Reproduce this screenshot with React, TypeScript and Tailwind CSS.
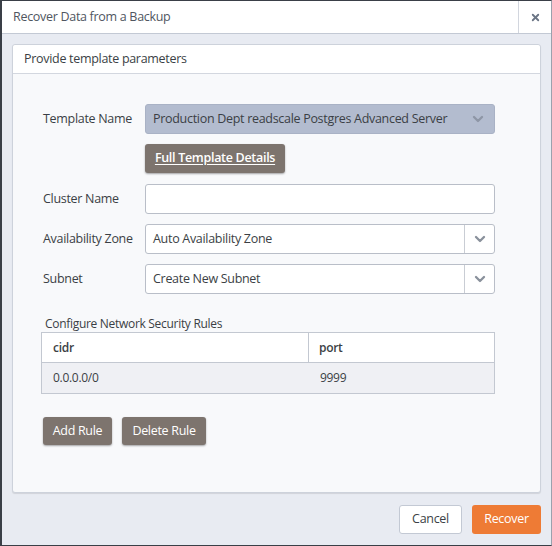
import { ChevronDown, X } from 'lucide-react'

function Chevron({ color = 'text-[#8a919c]' }: { color?: string }) {
  return <ChevronDown className={`w-4 h-4 ${color}`} strokeWidth={3.5} />
}

function FieldRow({ label, children }: { label: string; children: React.ReactNode }) {
  return (
    <div className="flex items-center">
      <div className="w-[102px] text-[#3b3f45]">{label}</div>
      <div className="w-[350px]">{children}</div>
    </div>
  )
}

function SelectBox({ value }: { value: string }) {
  return (
    <div className="h-[30px] flex items-stretch bg-white border border-[#b9bec8] rounded-[3px]">
      <div className="flex-1 flex items-center px-[7px] text-[#3b3f45]">{value}</div>
      <div className="w-[30px] border-l border-[#c9cdd4] flex items-center justify-center">
        <Chevron />
      </div>
    </div>
  )
}

const brownBtn =
  'bg-[#7d746e] text-white rounded-[3px] shadow-[0_1px_2px_rgba(0,0,0,0.35)]'

export default function App() {
  return (
    <div
      className="w-[552px] h-[546px] flex flex-col bg-[#e8ebf2] text-[12.5px] tracking-[-0.3px] border-l-2 border-t border-b border-r border-l-[#3a3f47] border-t-[#3a3f47] border-b-[#3a3f47] border-r-[#9aa1ad] overflow-hidden"
      style={{ fontFamily: '"Open Sans", "Noto Sans", sans-serif' }}
    >
      <div className="h-[33px] flex bg-white border-b border-[#c3c9d4] shrink-0">
        <div className="flex-1 flex items-center pl-[11px] text-[#50565f]">
          Recover Data from a Backup
        </div>
        <div className="w-[33px] border-l border-[#d2d6de] flex items-center justify-center">
          <X className="w-[11px] h-[11px] text-[#6b7585]" strokeWidth={4} />
        </div>
      </div>

      <div className="flex-1 flex flex-col px-[10px] pt-[10px]">
        <div className="h-[449px] flex flex-col bg-[#f8f9fb] border border-[#cdd2db] rounded-[3px] shadow-[0_1px_1px_rgba(0,0,0,0.1)]">
          <div className="h-[29px] flex items-center bg-white border-b border-[#d3d7df] pl-[11px] text-[#3b3f45] rounded-t-[3px]">
            Provide template parameters
          </div>

          <div className="flex flex-col pl-[30px] pt-[30px]">
            <FieldRow label="Template Name">
              <div className="h-[30px] flex items-center justify-between bg-[#b3bccf] border border-[#a9b2c5] rounded-[3px] pl-[7px] pr-[8px] text-[#3b3f45]">
                <span className="whitespace-nowrap">Production Dept readscale Postgres Advanced Server</span>
                <Chevron color="text-[#8e96a6]" />
              </div>
            </FieldRow>

            <div className="pl-[102px] mt-[10px]">
              <button className={`${brownBtn} h-[29px] w-[140px] font-semibold underline underline-offset-2`}>
                Full Template Details
              </button>
            </div>

            <div className="mt-[11px] flex flex-col gap-[10px]">
              <FieldRow label="Cluster Name">
                <div className="h-[30px] bg-white border border-[#b9bec8] rounded-[3px]" />
              </FieldRow>
              <FieldRow label="Availability Zone">
                <SelectBox value="Auto Availability Zone" />
              </FieldRow>
              <FieldRow label="Subnet">
                <SelectBox value="Create New Subnet" />
              </FieldRow>
            </div>

            <div className="mt-[22px] ml-[2px] text-[12px] leading-[16px] text-[#3b3f45]">
              Configure Network Security Rules
            </div>
            <div className="w-[454px] -ml-[2px] border border-[#c3c8d1] text-[12px] text-[#3b3f45]">
              <div className="h-[30px] flex bg-white border-b border-[#c3c8d1]">
                <div className="w-[267px] border-r border-[#c3c8d1] flex items-center pl-[11px] font-semibold">cidr</div>
                <div className="flex-1 flex items-center pl-[10px] font-semibold">port</div>
              </div>
              <div className="h-[30px] flex bg-[#eff0f4]">
                <div className="w-[267px] flex items-center pl-[11px]">0.0.0.0/0</div>
                <div className="flex-1 flex items-center pl-[11px]">9999</div>
              </div>
            </div>

            <div className="mt-[23px] flex gap-[10px]">
              <button className={`${brownBtn} h-[28px] w-[69px]`}>Add Rule</button>
              <button className={`${brownBtn} h-[28px] w-[84px]`}>Delete Rule</button>
            </div>
          </div>
        </div>

        <div className="flex justify-end gap-[10px] mt-[12px]">
          <button className="h-[29px] w-[63px] bg-white border border-[#c3c9d4] rounded-[3px] text-[#3b3f45]">
            Cancel
          </button>
          <button className="h-[29px] w-[69px] bg-[#ee7b35] rounded-[3px] text-white">
            Recover
          </button>
        </div>
      </div>
    </div>
  )
}
